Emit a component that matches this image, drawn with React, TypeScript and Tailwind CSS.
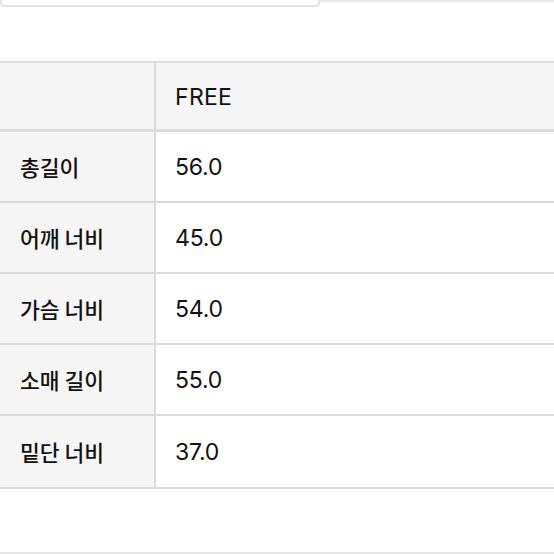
import React from "react";

const rows = [
  { label: "총길이", value: "56.0" },
  { label: "어깨 너비", value: "45.0" },
  { label: "가슴 너비", value: "54.0" },
  { label: "소매 길이", value: "55.0" },
  { label: "밑단 너비", value: "37.0" },
];

export default function App() {
  return (
    <div className="w-[554px] h-[554px] bg-white overflow-hidden flex flex-col font-['Noto_Sans_CJK_KR','Noto_Sans',sans-serif] text-[#111]">
      <div className="flex h-[7px]">
        <div className="w-[320px] h-[7px] border-2 border-t-0 border-[#e2e2e2] rounded-b-[4px]" />
        <div className="flex-1 border-t-2 border-[#e6e6e6]" />
      </div>
      <div className="mt-[54px] border-t-2 border-b-2 border-[#dadada]">
        <div className="flex h-[69px] bg-[#f5f5f5] border-b-[3px] border-[#dcdcdc]">
          <div className="w-[156px] border-r-2 border-[#dadada]" />
          <div className="flex-1 flex items-center pl-[19px] pt-[2px] text-[23px] font-['Inter','Noto_Sans',sans-serif] tracking-[0.3px]">
            FREE
          </div>
        </div>
        {rows.map((r, i) => (
          <div
            key={r.label}
            className={
              "flex h-[71px] " +
              (i < rows.length - 1 ? "border-b-2 border-[#dadada]" : "")
            }
          >
            <div className="w-[156px] bg-[#f5f5f5] border-r-2 border-[#dadada] flex items-center pl-[20px] pt-[2px] text-[21.5px] font-medium">
              {r.label}
            </div>
            <div className="flex-1 flex items-center pl-[19px] pt-[2px] text-[23px] font-['Inter','Noto_Sans',sans-serif] tracking-[-0.2px]">
              {r.value}
            </div>
          </div>
        ))}
      </div>
      <div className="mt-[63px] border-t-2 border-[#e6e6e6]" />
    </div>
  );
}
